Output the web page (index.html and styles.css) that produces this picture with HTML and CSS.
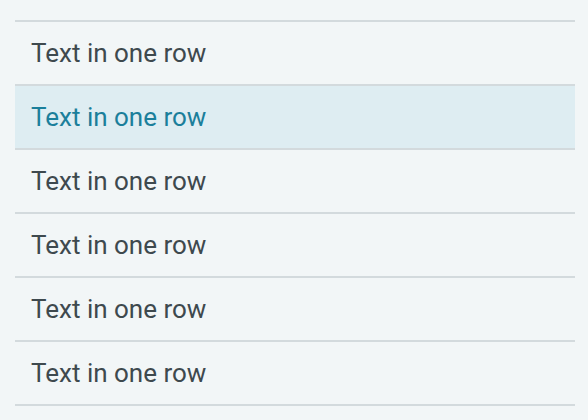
FILE: index.html
```html
<!DOCTYPE html>
<html>
<head>
<meta charset="utf-8">
<link rel="stylesheet" href="styles.css">
</head>
<body>
<ul class="list">
  <li class="row">Text in one row</li>
  <li class="row row--active">Text in one row</li>
  <li class="row">Text in one row</li>
  <li class="row">Text in one row</li>
  <li class="row">Text in one row</li>
  <li class="row">Text in one row</li>
</ul>
</body>
</html>
```
FILE: styles.css
```css
html, body {
  margin: 0;
  padding: 0;
  background: #f2f6f7;
}
body {
  padding: 20px 13px 0 15px;
  font-family: Roboto, "Liberation Sans", sans-serif;
}
.list {
  list-style: none;
  margin: 0;
  padding: 0;
  width: 560px;
  border-top: 2px solid #d3dadd;
}
.row {
  height: 62px;
  display: flex;
  align-items: center;
  padding-left: 16px;
  font-size: 26px;
  color: #3e494e;
  border-bottom: 2px solid #d3dadd;
}
.row--active {
  background: #deedf2;
  color: #1b7f9b;
}
```
